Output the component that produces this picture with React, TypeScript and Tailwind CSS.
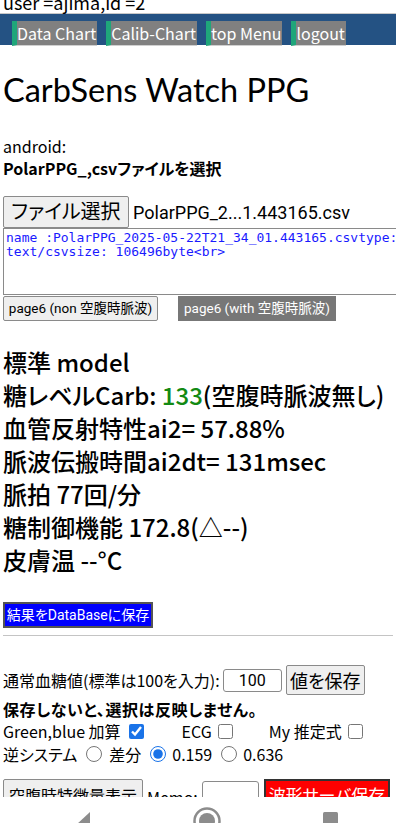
export default function App() {
  const menu = ['Data Chart', 'Calib-Chart', 'top Menu', 'logout'];
  const results = [
    '標準 model',
    null,
    '血管反射特性ai2= 57.88%',
    '脈波伝搬時間ai2dt= 131msec',
    '脈拍 77回/分',
    '糖制御機能 172.8(△--)',
    '皮膚温 --°C',
  ];

  return (
    <div className="h-[823px] overflow-hidden bg-white text-black font-['Noto_Sans_CJK_JP',sans-serif] [font-feature-settings:'palt']">
      {/* ユーザー */}
      <div className="mt-[-9px] px-[3px] text-[18px] leading-[22px]">user =ajima,id =2</div>

      {/* メニュー */}
      <div className="flex h-[32px] items-end gap-[9px] border-t border-[#c8c8c8] bg-[#245283] pl-[12px]">
        {menu.map((m) => (
          <div
            key={m}
            className="mb-[-1px] h-[25px] border-b border-l-[5px] border-b-[#d0d0d0] border-l-[#1fa67a] bg-[#808080] pr-[1px] text-[16px] leading-[24px] text-white"
          >
            {m}
          </div>
        ))}
      </div>

      <div className="px-[3px]">
        <h1 className="mt-[22px] font-['Lato','Noto_Sans_CJK_JP',sans-serif] text-[32.5px] leading-[46px] font-normal">CarbSens Watch PPG</h1>

        <div className="mt-[22px] text-[16px] leading-[22px]">android:</div>
        <div className="text-[16px] leading-[22px] font-bold">PolarPPG_,csvファイルを選択</div>

        {/* ファイル */}
        <div className="mt-[17px] flex items-center font-['Roboto','Noto_Sans_CJK_JP',sans-serif] text-[20px]">
          <button className="h-[32px] w-[126px] rounded-[2px] border border-[#8a8a8a] bg-[#efefef] leading-[30px]">ファイル選択</button>
          <span className="ml-[4px] text-[18px]">PolarPPG_2...1.443165.csv</span>
        </div>

        <div className="mr-[-10px] h-[67px] border border-[#8a8a8a] pl-[2px] pt-[2px] font-['DejaVu_Sans_Mono',monospace] text-[13px] leading-[14px] text-[#1a1aff] whitespace-nowrap overflow-hidden">
          <div>name :PolarPPG_2025-05-22T21_34_01.443165.csvtype:</div>
          <div>text/csvsize: 106496byte&lt;br&gt;</div>
        </div>

        <div className="mt-[1px] flex items-center gap-[20px] font-['Roboto','Noto_Sans_CJK_JP',sans-serif] text-[13.5px]">
          <button className="h-[25px] w-[155px] rounded-[2px] border border-[#8a8a8a] bg-[#efefef] leading-[23px]">page6 (non 空腹時脈波)</button>
          <button className="h-[25px] w-[158px] bg-[#777777] leading-[25px] text-white">page6 (with 空腹時脈波)</button>
        </div>

        {/* 結果 */}
        <div className="mt-[24px] text-[24px] leading-[33px] font-medium">
          {results.map((r, i) =>
            r === null ? (
              <div key={i}>
                糖レベルCarb: <span className="text-[#138a13]">133</span>(空腹時脈波無し)
              </div>
            ) : (
              <div key={i}>{r}</div>
            ),
          )}
        </div>

        <button className="mt-[26px] h-[26px] w-[150px] border-2 border-[#555] bg-[#0000ff] font-['Roboto','Noto_Sans_CJK_JP',sans-serif] text-[14px] leading-[22px] text-white">
          結果をDataBaseに保存
        </button>

        <hr className="mt-[7px] border-t border-[#c4c4c4]" />

        {/* 通常血糖値 */}
        <div className="mt-[29px] flex items-center text-[16px]">
          <span>通常血糖値(標準は100を入力):</span>
          <div className="ml-[3px] h-[23px] w-[59px] rounded-[3px] border border-[#8a8a8a] text-center font-['Roboto',sans-serif] text-[16px] leading-[21px]">100</div>
          <button className="ml-[4px] h-[30px] w-[79px] rounded-[2px] border border-[#8a8a8a] bg-[#efefef] text-[18px] leading-[28px]">値を保存</button>
        </div>
        <div className="mt-[4px] text-[16px] leading-[20px] font-bold tracking-[0.6px]">保存しないと、選択は反映しません。</div>

        <div className="mt-[1px] flex items-center text-[16px] leading-[22px]">
          <span>Green,blue 加算</span>
          <input type="checkbox" defaultChecked className="ml-[8px] h-[15px] w-[15px] accent-[#1a73e8]" />
          <span className="ml-[38px]">ECG</span>
          <input type="checkbox" className="ml-[6px] h-[15px] w-[15px]" />
          <span className="ml-[36px]">My 推定式</span>
          <input type="checkbox" className="ml-[6px] h-[15px] w-[15px]" />
        </div>

        <div className="mt-[1px] flex items-center text-[16px] leading-[22px]">
          <span>逆システム</span>
          <input type="radio" name="inv" className="ml-[9px] h-[16px] w-[16px]" />
          <span className="ml-[7px]">差分</span>
          <input type="radio" name="inv" defaultChecked className="ml-[9px] h-[16px] w-[16px] accent-[#1a73e8]" />
          <span className="ml-[6px]">0.159</span>
          <input type="radio" name="inv" className="ml-[9px] h-[16px] w-[16px]" />
          <span className="ml-[6px]">0.636</span>
        </div>

        <div className="mt-[14px] flex items-start text-[16px]">
          <button className="h-[32px] w-[140px] rounded-[2px] border border-[#8a8a8a] bg-[#efefef] text-[16px] leading-[30px]">空腹時特徴量表示</button>
          <span className="ml-[4px] mt-[6px] w-[55px]">Memo:</span>
          <div className="mt-[2px] h-[26px] w-[57px] rounded-[3px] border border-[#8a8a8a]" />
          <button className="ml-[5px] h-[32px] w-[126px] border-2 border-[#333] bg-[#ff0000] text-[17px] leading-[28px] text-white">波形サーバ保存</button>
        </div>
      </div>

      {/* Android ナビゲーション */}
      <div className="fixed bottom-0 left-0 h-[26px] w-[396px] overflow-hidden bg-white">
        <svg width="396" height="40" viewBox="0 0 396 40" className="block">
          <polygon points="76,28 90,15 90,41" fill="#8c8c8c" />
          <circle cx="207" cy="24" r="12.5" fill="none" stroke="#8c8c8c" strokeWidth="2.5" />
          <circle cx="207" cy="24" r="8" fill="#8c8c8c" />
          <rect x="323" y="15" width="15" height="20" rx="1.5" fill="#8c8c8c" />
        </svg>
      </div>
    </div>
  );
}
